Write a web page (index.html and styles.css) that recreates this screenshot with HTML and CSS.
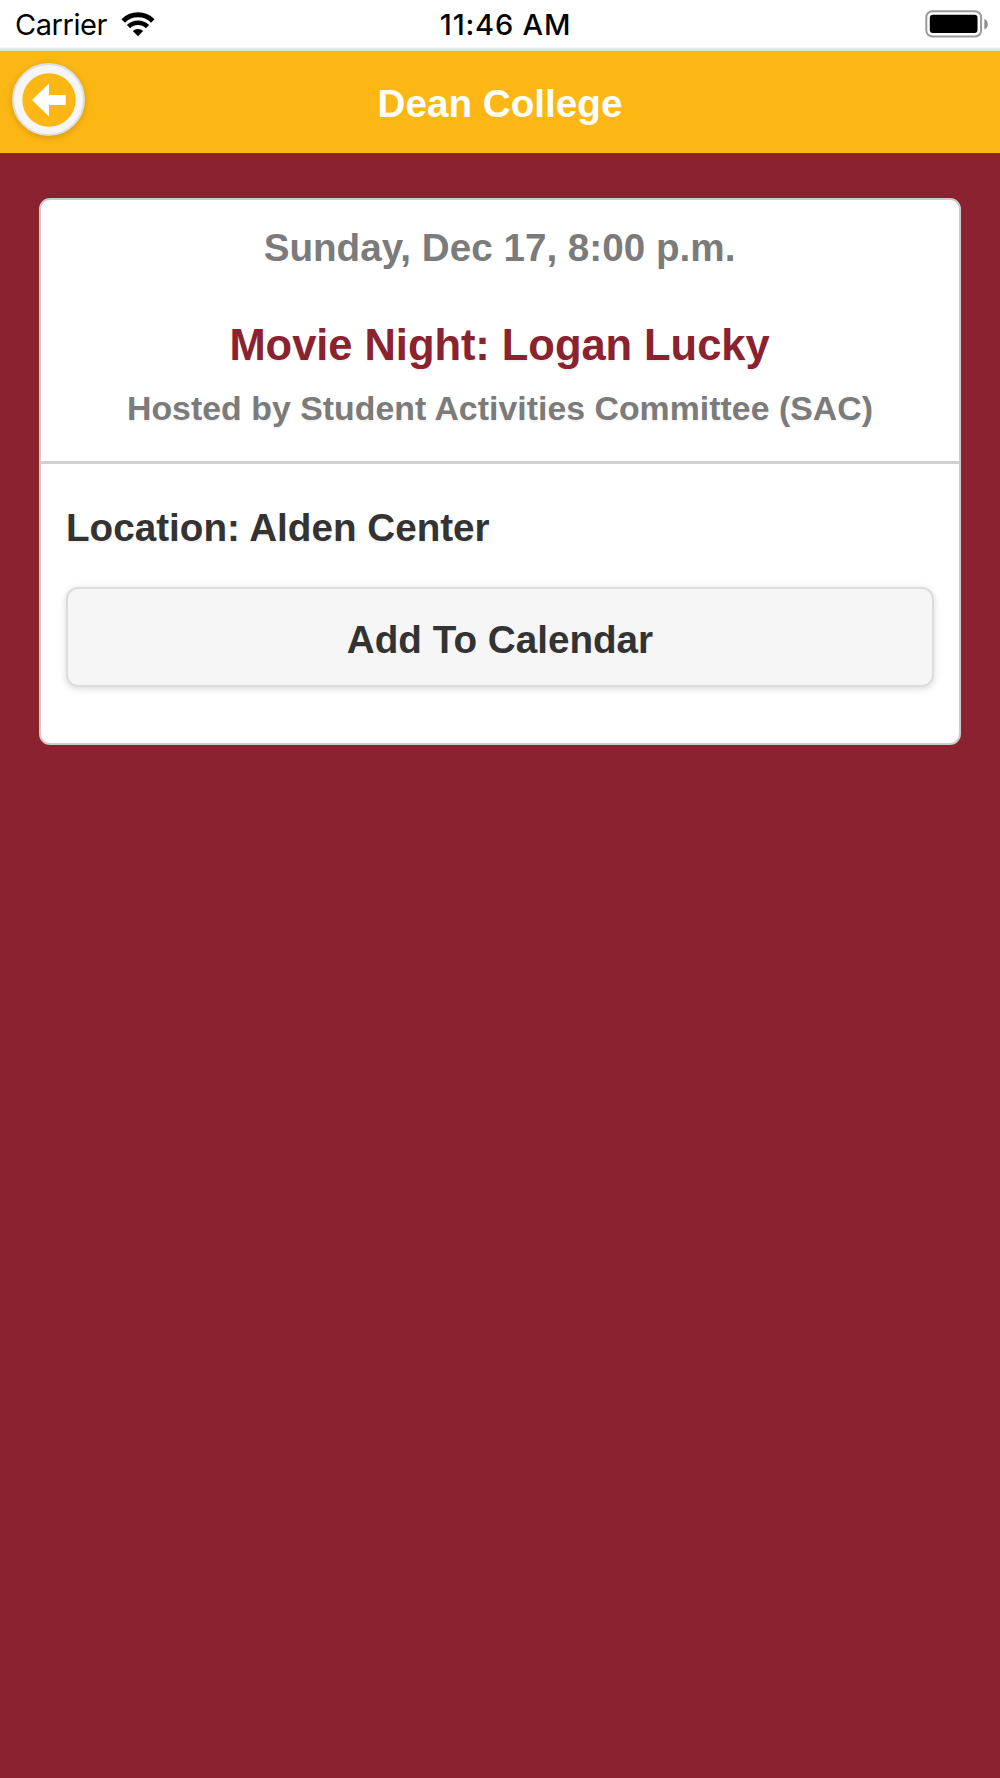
FILE: index.html
```html
<!DOCTYPE html>
<html lang="en">
<head>
<meta charset="utf-8">
<title>Dean College</title>
<link rel="stylesheet" href="styles.css">
</head>
<body>
<div class="status">
  <div class="status-left">
    <span class="carrier">Carrier</span>
    <svg class="wifi" width="34" height="26" viewBox="0 0 34 26" fill="none" stroke="#000">
      <path d="M2.2 8.900a20.900 20.900 0 0 1 29.600 0" stroke-width="5"/>
      <path d="M7.500 14.700a13.500 13.500 0 0 1 19 0" stroke-width="4.600"/>
      <path d="M17 24.300l-5.200-5.200a7.400 7.400 0 0 1 10.400 0z" fill="#000" stroke="none"/>
    </svg>
  </div>
  <span class="time">11:46 AM</span>
  <svg class="battery" width="64" height="28" viewBox="0 0 64 28">
    <rect x="1.300" y="1.200" width="54.800" height="25.300" rx="6" fill="none" stroke="#999" stroke-width="2"/>
    <rect x="4.800" y="4.800" width="47.700" height="18.200" rx="3" fill="#000"/>
    <path d="M59.300 9c4.700 1 4.700 9.500 0 10.300z" fill="#8f8f8f"/>
  </svg>
</div>
<header class="header">
  <button class="back" aria-label="Back">
    <svg width="54" height="54" viewBox="0 0 54 54">
      <circle cx="27" cy="27" r="26.700" fill="#fdb714"/>
      <path d="M10 27L27 10.400V22H43.700V32H27V43.600z" fill="#fff"/>
    </svg>
  </button>
  <h1 class="heading">Dean College</h1>
</header>
<main class="card">
  <section class="summary">
    <p class="date">Sunday, Dec 17, 8:00 p.m.</p>
    <h2 class="title">Movie Night: Logan Lucky</h2>
    <p class="host">Hosted by Student Activities Committee (SAC)</p>
  </section>
  <section class="details">
    <p class="location">Location: Alden Center</p>
    <button class="add">Add To Calendar</button>
  </section>
</main>
</body>
</html>
```

FILE: styles.css
```css
* { box-sizing: border-box; margin: 0; padding: 0; }
body {
  min-height: 1778px;
  background: #8a2230;
  font-family: "Liberation Sans", Arial, sans-serif;
  font-weight: bold;
  font-size: 38.65px;
}
.status {
  height: 51px;
  padding: 0 11px 1px 15px;
  background: linear-gradient(#fff 47px, #eee 48px, #e3dccb 51px);
  display: grid;
  grid-template-columns: 1fr auto 1fr;
  align-items: center;
  font: 400 29px/48px Inter, sans-serif;
  color: #000;
}
.status-left { display: flex; align-items: center; gap: 14px; }
.carrier { letter-spacing: -0.45px; }
.time { font-weight: 500; letter-spacing: 0.8px; margin-left: 7px; }
.battery { justify-self: end; margin-top: -2px; }
.header {
  height: 102px;
  padding: 0 12px;
  background: #fdb714;
  display: grid;
  grid-template-columns: 73px 1fr 73px;
  align-items: start;
}
.back {
  width: 73px;
  height: 73px;
  margin-top: 12px;
  border: 2px solid #ddd;
  border-radius: 50%;
  background: #f6f6f6;
  box-shadow: 0 2px 7px rgba(0, 0, 0, .16);
  display: flex;
  align-items: center;
  justify-content: center;
}
.heading {
  margin-top: 30px;
  font-size: 38.65px;
  line-height: 46px;
  text-align: center;
  color: #fff;
}
.card {
  margin: 45px 39px 0;
  height: 547px;
  border: 2px solid #ccc;
  border-radius: 11px;
  background: #fff;
}
.summary {
  height: 264px;
  padding-top: 25px;
  border-bottom: 3px solid #d0d0d0;
  text-align: center;
  color: #7b7b7b;
}
.date { line-height: 46px; padding-right: 1px; }
.title {
  margin-top: 48px;
  padding-right: 1px;
  font-size: 43.5px;
  letter-spacing: -0.05px;
  line-height: 52px;
  color: #8a2230;
  text-shadow: 0 2px 0 #f3f3f3;
}
.host {
  margin-top: 17px;
  font-size: 33.8px;
  letter-spacing: 0.04px;
  line-height: 40px;
  text-shadow: 0 2px 0 #f3f3f3;
}
.details { padding: 41px 25px 0; color: #333; }
.location { line-height: 46px; text-shadow: 0 2px 0 #f3f3f3; }
.add {
  display: block;
  width: 100%;
  height: 100px;
  margin-top: 36px;
  padding-top: 5px;
  border: 2px solid #ddd;
  border-radius: 12px;
  background: #f6f6f6;
  box-shadow: 0 2px 7px rgba(0, 0, 0, .15);
  font: inherit;
  color: #333;
}
```
